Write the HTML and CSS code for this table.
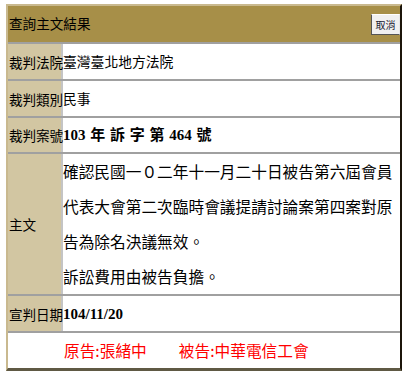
FILE: index.html
```html
<!DOCTYPE html>
<html lang="zh-Hant">
<head>
<meta charset="utf-8">
<title>查詢主文結果</title>
<link rel="stylesheet" href="styles.css">
</head>
<body>
<div class="panel">
  <div class="head">
    <span class="title">查詢主文結果</span>
    <button class="cancel" type="button">取消</button>
  </div>
  <div class="row">
    <div class="label">裁判法院</div>
    <div class="value">臺灣臺北地方法院</div>
  </div>
  <div class="row">
    <div class="label">裁判類別</div>
    <div class="value">民事</div>
  </div>
  <div class="row row-short">
    <div class="label">裁判案號</div>
    <div class="value bold">103 年 訴 字 第 464 號</div>
  </div>
  <div class="row">
    <div class="label">主文</div>
    <div class="value main">確認民國一０二年十一月二十日被告第六屆會員<br>代表大會第二次臨時會議提請討論案第四案對原<br>告為除名決議無效。<br>訴訟費用由被告負擔。</div>
  </div>
  <div class="row">
    <div class="label">宣判日期</div>
    <div class="value bold">104/11/20</div>
  </div>
  <div class="parties">
    <span>原告:張緒中</span>
    <span>被告:中華電信工會</span>
  </div>
</div>
</body>
</html>
```

FILE: styles.css
```css
html, body {
  margin: 0;
  padding: 0;
  background: #ffffff;
}

body {
  font-family: "Noto Sans CJK TC", "Noto Sans", sans-serif;
  color: #000;
}

.panel {
  margin: 4px 0 0 6px;
  width: 392px;
  border-style: solid;
  border-width: 2px 2px 3px 2px;
  border-color: #c9b98f #1c150a #5f5944 #c9b98f;
  background: #ffffff;
}

.head {
  height: 36px;
  background: #a78f48;
  display: flex;
  align-items: center;
  justify-content: space-between;
  padding-left: 1px;
  border-bottom: 2px solid #a0a0a0;
}

.title {
  font-size: 13.6px;
  line-height: 1;
}

.cancel {
  width: 29px;
  height: 21px;
  padding: 0;
  margin: 1px 0 0 0;
  background: #f0f0f0;
  border-style: solid;
  border-width: 1px;
  border-color: #ffffff #e6e6e6 #555555 #555555;
  font-family: "Noto Sans CJK TC", sans-serif;
  font-size: 10px;
  color: #223;
  line-height: 1;
}

.row {
  display: flex;
  border-bottom: 2px solid #a0a0a0;
  min-height: 35px;
}

.row-short {
  min-height: 34px;
}

.label {
  width: 55px;
  flex: none;
  background: #d2c6a2;
  border-right: 2px solid #c4c4c4;
  display: flex;
  align-items: center;
  padding-left: 1px;
  box-sizing: border-box;
  font-size: 13.6px;
  white-space: nowrap;
  letter-spacing: -0.1px;
}

.value {
  flex: 1;
  display: flex;
  align-items: center;
  font-size: 13.8px;
  line-height: 1.2;
}

.bold {
  font-family: "Liberation Serif", "Noto Sans CJK TC", serif;
  font-weight: bold;
  font-size: 15px;
  word-spacing: 1px;
}

.main {
  display: block;
  font-size: 15.7px;
  line-height: 35px;
  white-space: nowrap;
}

.parties {
  height: 35px;
  display: flex;
  align-items: center;
  gap: 32px;
  padding-left: 56px;
  color: #ff0000;
  font-size: 15.7px;
}
```
